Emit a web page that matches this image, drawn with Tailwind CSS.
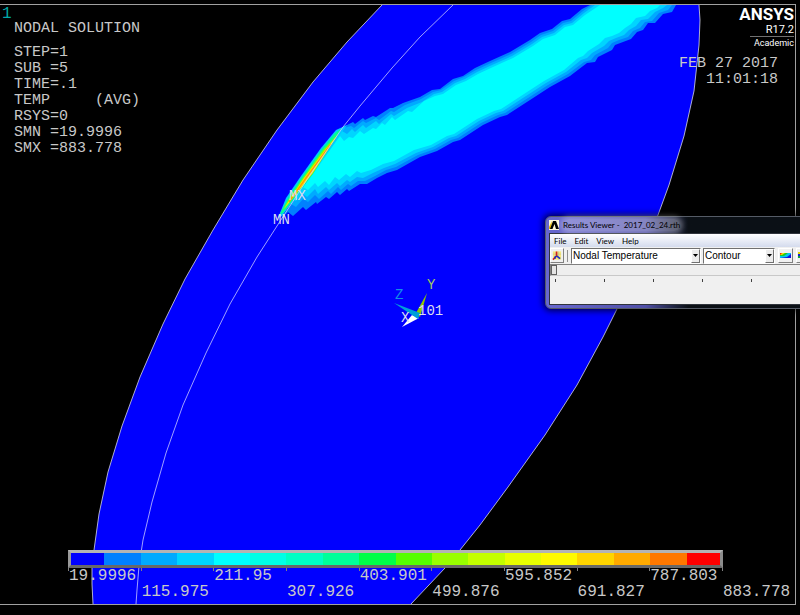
<!DOCTYPE html>
<html lang="en">
  <head>
    <meta charset="UTF-8" />
    <meta name="viewport" content="width=device-width, initial-scale=1.0" />
    <title>Nodal Solution</title>
    <script src="https://cdn.jsdelivr.net/npm/@tailwindcss/browser@4"></script>
  </head>
  <body class="bg-black">
    <main class="relative flex flex-col h-screen overflow-hidden bg-black pt-1 pb-[10px] pr-1 font-['Liberation_Mono',monospace] text-[15px] leading-4 text-[#c8c8c8]">
      <!-- contour plot -->
      <svg class="absolute inset-0 w-full h-full" viewBox="0 0 800 615" preserveAspectRatio="xMidYMid slice" role="img" aria-label="Temperature contour">
        <path fill="#0000ff" d="M382 5 347 42 313 82 277 130 243 180 213 230 185 279 163 324 140 377 122 426 108 472 99 514 94 550 92 568 92 584 93 604H411L445 568 460 550 480 525 508 487 545 435 577 385 603 337 617 309 658 215 669 185 684 136 694 91 699 45 700 20 699 5Z" />
        <g fill="none" stroke="#d8d8e8" stroke-width="0.8">
          <path d="M382 5 347 42 313 82 277 130 243 180 213 230 185 279 163 324 140 377 122 426 108 472 99 514 94 550 92 568 92 584 93 604" />
          <path d="M411 604 445 568 460 550 480 525 508 487 545 435 577 385 603 337 617 309 658 215 669 185 684 136 694 91 699 45 700 20 699 5" />
        </g>
        <path fill="#0080ff" d="M280 220 310 176 343 127 353 122 355 124 363 118 365 120 373 116 376 117 387 110 390 108 393 108 403 103 420 97 432 90 440 89 453 79 463 76 475 68 490 61 510 52 530 40 540 33 552 29 562 21 570 19 582 9 590 5H676L672 12 663 14 655 23 648 23 643 30 637 32 631 39 623 42 615 45 612 50 598 57 595 62 587 63 570 76 550 87 530 100 507 115 500 117 483 125 460 140 453 142 437 151 420 157 397 170 387 173 377 178 367 184 360 184 349 191 347 189 340 195 337 192 329 199 326 197 317 204 316 202 306 210 303 207 293 216 288 212Z" />
        <path fill="#00aaff" d="M282 217 310 176 343 128 351 126 354 128 363 121 366 123 376 118 379 120 391 111 394 112 405 105 421 99 433 92 441 90 454 81 464 77 476 70 491 63 511 54 531 42 541 35 553 31 563 23 571 21 583 11 592 5H672L668 10 659 13 652 21 645 22 640 28 633 31 628 37 619 40 612 43 608 48 595 55 591 60 584 62 568 74 548 85 528 98 505 113 498 115 481 123 458 138 451 140 435 149 418 155 396 167 386 170 375 176 365 181 358 181 351 186 348 184 341 190 338 187 331 194 328 191 319 199 315 195 308 202 303 199 296 207 291 204 287 210Z" />
        <path fill="#00d5ff" d="M284 213 310 177 342 131 347 134 352 129 355 132 363 125 366 128 376 121 379 124 391 114 394 116 407 108 422 102 434 94 442 92 455 83 465 79 477 72 492 65 512 56 532 44 542 37 554 33 564 25 572 23 584 13 595 5H667L663 8 655 12 648 19 641 20 636 26 629 30 624 35 616 38 609 41 604 46 592 53 587 58 581 60 566 72 546 83 526 96 503 111 496 113 479 121 456 136 449 138 433 147 416 153 395 164 384 168 373 173 363 178 357 177 350 182 347 180 340 186 337 183 329 190 326 187 318 194 315 189 307 197 302 193 296 201 291 199Z" />
        <path fill="#00ffff" d="M288 207 310 178 340 136 344 141 349 137 353 138 360 131 364 134 373 128 376 129 382 123 385 125 392 117 395 120 408 111 412 112 424 101 435 96 443 94 456 85 466 81 478 74 493 67 513 58 533 46 543 39 555 35 565 27 573 25 585 15 600 5H660L657 8 650 11 645 16 636 18 631 24 625 28 619 33 612 36 605 38 599 44 588 51 583 56 578 58 564 70 544 81 524 94 501 109 494 111 477 119 454 134 447 136 431 145 414 150 394 161 383 164 371 170 361 173 357 171 350 177 346 174 339 180 335 177 329 185 325 181 318 187 315 183 308 190 303 187 297 194 294 194Z" />

        <!-- hot edge under the beam -->
        <path fill="#00c8ff" d="M347 125 336 130 321 148 301 176 286 198 278 218 282 216 312 174Z" />
        <path fill="#00ff90" d="M341 129 335 133 322 149 302 177 288 198 280 214 283 213 313 174Z" />
        <path fill="#80ff00" d="M339 133 324 149 303 178 289 199 282 211 313 173Z" />
        <path fill="#ffe800" d="M337 136 325 150 304 178 290 199 284 209 312 174Z" />
        <path fill="none" stroke="#ff9900" stroke-width="1.300" d="M331 144 306 178 289 202" />
        <path fill="none" stroke="#c8c8ff" stroke-width="0.8" d="M453 5 420 37 392 68 360 106 343 127 310 175 277 226 257 257 230 304 206 353 183 405 166 453 152 502 143 540 139 566 137 590 136 604" />

        <!-- axis triad -->
        <path fill="#90c800" d="M427 293 416 313 420 317Z" />
        <path fill="#ffffff" d="M402 327 412 315 419 318Z" />
        <path fill="#009fd8" d="M394 303 420 313 418 319 412 315Z" />
        <g font-family="Liberation Mono, monospace" font-size="14" fill="#dcdcf0">
          <text x="289" y="200">MX</text>
          <text x="273" y="224">MN</text>
          <text x="418" y="315">101</text>
          <text x="401" y="322">X</text>
          <text x="427" y="289" fill="#a0c860">Y</text>
          <text x="395" y="299" fill="#1090e8">Z</text>
        </g>
      </svg>

      <div class="relative flex flex-1 flex-col border-t border-r border-b border-[#a0a0a0]">
        <header class="flex justify-between">
          <div class="pl-[2px] pt-px">
            <p class="text-[16px] text-[#00a8a8]">1</p>
            <div class="pl-3">
              <h1 class="-mt-px">NODAL SOLUTION</h1>
              <pre class="mt-2 font-['Liberation_Mono',monospace]">STEP=1
SUB =5
TIME=.1
TEMP     (AVG)
RSYS=0
SMN =19.9996
SMX =883.778</pre>
            </div>
          </div>
          <div class="flex flex-col items-end pr-px text-white">
            <div class="flex flex-col items-end font-['Roboto',sans-serif]">
              <p class="text-[17px] leading-[19px] font-bold">ANSYS</p>
              <p class="text-[11px] leading-3">R17.2</p>
              <p class="border-t border-[#707070] pl-1 text-[9px] leading-3">Academic</p>
            </div>
            <p class="mt-[7px] pr-4 text-right text-[#c8c8c8]">FEB 27 2017<br />11:01:18</p>
          </div>
        </header>

        <!-- colour legend -->
        <section class="mt-auto ml-[68px] mr-[72px] pb-[5px] text-[16px]" aria-label="Temperature legend">
          <div class="relative h-[18px]">
            <div class="grid h-full grid-cols-[repeat(18,minmax(0,1fr))]">
              <i class="bg-[#0000ff]"></i>
              <i class="bg-[#0080ff]"></i>
              <i class="bg-[#00aaff]"></i>
              <i class="bg-[#00d5ff]"></i>
              <i class="bg-[#00ffff]"></i>
              <i class="bg-[#00ffe5]"></i>
              <i class="bg-[#00ffc4]"></i>
              <i class="bg-[#00ff99]"></i>
              <i class="bg-[#00ff48]"></i>
              <i class="bg-[#55ff00]"></i>
              <i class="bg-[#99ff00]"></i>
              <i class="bg-[#c4ff00]"></i>
              <i class="bg-[#e8ff00]"></i>
              <i class="bg-[#fffa00]"></i>
              <i class="bg-[#ffd400]"></i>
              <i class="bg-[#ffaa00]"></i>
              <i class="bg-[#ff7800]"></i>
              <i class="bg-[#ff0000]"></i>
            </div>
            <div class="absolute inset-0 border-3 border-t-[#b4b4b4] border-r-[#8c8c8c] border-b-[#686868] border-l-[#999999]"></div>
          </div>
          <div class="flex h-[31px] justify-between">
            <span class="w-0 border-l border-[#808080] h-[3px]">19.9996</span>
            <span class="w-0 border-l border-[#808080] h-[3px] whitespace-pre-line">
115.975</span>
            <span class="w-0 border-l border-[#808080] h-[3px]">211.95</span>
            <span class="w-0 border-l border-[#808080] h-[3px] whitespace-pre-line">
307.926</span>
            <span class="w-0 border-l border-[#808080] h-[3px]">403.901</span>
            <span class="w-0 border-l border-[#808080] h-[3px] whitespace-pre-line">
499.876</span>
            <span class="w-0 border-l border-[#808080] h-[3px]">595.852</span>
            <span class="w-0 border-l border-[#808080] h-[3px] whitespace-pre-line">
691.827</span>
            <span class="w-0 border-l border-[#808080] h-[3px]">787.803</span>
            <span class="w-0 border-l border-[#808080] h-[3px] whitespace-pre-line">
883.778</span>
          </div>
        </section>
      </div>

      <!-- floating results viewer, runs off the right edge -->
      <section class="absolute left-[545px] -right-8 top-[216px] rounded-md border border-[#555b66] bg-linear-to-r from-[#6868d0] from-0% via-[#5050a8] via-35% to-[#0b1016] to-50% px-[3px] pb-[3px] font-['Lato',sans-serif] text-black shadow-[0_0_6px_2px_#000000b0]">
        <div class="flex h-4 items-center gap-1 whitespace-pre text-[8px] leading-3">
          <svg class="w-[10px] h-[10px]" viewBox="0 0 10 10">
            <path fill="#fff8dc" d="M0 0h10v10H0z" />
            <path fill="#e8b800" d="M0 7 3 1 2 9H0z" />
            <path fill="#000" d="M4 1h3l3 8H7L5.5 4 3.500 9H1z" />
          </svg>
          <h2 class="rounded-full bg-white/30 shadow-[0_0_5px_3px_#ffffff4d]">Results Viewer -  2017_02_24.rth</h2>
        </div>
        <div class="border border-[#30343c] bg-[#f0f0f0]">
          <nav class="flex h-[13px] items-center gap-2 bg-linear-to-b from-white to-[#d4dbed] pl-1 text-[8px] leading-3">
            <button>File</button>
            <button>Edit</button>
            <button>View</button>
            <button>Help</button>
          </nav>
          <div class="flex h-[17px] items-center gap-[2px] overflow-hidden font-['Liberation_Sans',sans-serif] text-[10px]">
            <button class="h-[15px] w-[14px] shrink-0 border border-t-white border-l-white border-r-[#808080] border-b-[#808080] p-px" aria-label="Plot results">
              <svg class="w-full h-full" viewBox="0 0 11 11">
                <path fill="#f4e87c" d="M1 1h9v9H1z" />
                <path fill="none" stroke="#b0b090" stroke-width="0.500" d="M7 1v9M1 4h9" />
                <path fill="none" stroke="#d02020" stroke-width="1.800" d="M5 1v5L1 10" />
                <path fill="none" stroke="#2030c0" stroke-width="1.800" d="M5 6l4 3M4 6 3 9" />
              </svg>
            </button>
            <i class="mx-px h-3 w-px shrink-0 bg-[#909090]"></i>
            <div class="relative w-[130px] shrink-0">
              <select class="block h-4 w-full appearance-none border border-t-[#707070] border-l-[#707070] border-r-white border-b-white bg-white pl-px leading-3" aria-label="Result item">
                <option>Nodal Temperature</option>
              </select>
              <span class="pointer-events-none absolute top-px right-px bottom-px flex w-[9px] items-center justify-center border border-t-white border-l-white border-r-[#707070] border-b-[#707070] bg-[#ececec]">
                <svg class="w-[5px] h-[3px]" viewBox="0 0 5 3"><path d="M0 0h5L2.500 3z" /></svg>
              </span>
            </div>
            <div class="relative w-[72px] shrink-0">
              <select class="block h-4 w-full appearance-none border border-t-[#707070] border-l-[#707070] border-r-white border-b-white bg-white pl-px leading-3" aria-label="Display type">
                <option>Contour</option>
              </select>
              <span class="pointer-events-none absolute top-px right-px bottom-px flex w-[9px] items-center justify-center border border-t-white border-l-white border-r-[#707070] border-b-[#707070] bg-[#ececec]">
                <svg class="w-[5px] h-[3px]" viewBox="0 0 5 3"><path d="M0 0h5L2.500 3z" /></svg>
              </span>
            </div>
            <button class="h-[15px] w-[15px] ml-px shrink-0 border border-t-white border-l-white border-r-[#808080] border-b-[#808080]" aria-label="Contour plot">
              <svg class="w-full h-full" viewBox="0 0 13 13">
                <path fill="#00c8f0" d="M1 4h11v5H1z" />
                <path fill="#20c820" d="M1 4h8L5 7H1z" />
                <path fill="#f0e000" d="M1 4h5L3 6H1z" />
                <path fill="#f02000" d="M1 4h2L1 6z" />
                <path fill="#1010e0" d="M12 5v4H1l7-1z" />
              </svg>
            </button>
            <button class="h-[15px] w-[15px] ml-px shrink-0 border border-t-white border-l-white border-r-[#808080] border-b-[#808080]" aria-label="List results">
              <svg class="w-full h-full" viewBox="0 0 13 13">
                <path fill="#e8d800" d="M1 3h11v2H1z" />
                <path fill="#1020d0" d="M1 5h11v2H1z" />
                <path fill="#10a040" d="M1 7h11v2H1z" />
              </svg>
            </button>
          </div>
          <input type="range" min="0" max="100" value="0" aria-label="Result set" class="block h-3 w-full appearance-none border border-t-[#808080] border-l-[#808080] border-r-white border-b-[#c8c8c8] bg-[#eeeeee] [&::-webkit-slider-thumb]:h-[10px] [&::-webkit-slider-thumb]:w-[6px] [&::-webkit-slider-thumb]:appearance-none [&::-webkit-slider-thumb]:border [&::-webkit-slider-thumb]:border-[#606060] [&::-webkit-slider-thumb]:bg-[#e4e4e4]" />
          <div class="flex h-7 gap-12 overflow-hidden pt-[3px] pl-[5px]">
            <i class="h-[3px] w-px shrink-0 bg-[#404040]"></i>
            <i class="h-[3px] w-px shrink-0 bg-[#404040]"></i>
            <i class="h-[3px] w-px shrink-0 bg-[#404040]"></i>
            <i class="h-[3px] w-px shrink-0 bg-[#404040]"></i>
            <i class="h-[3px] w-px shrink-0 bg-[#404040]"></i>
          </div>
        </div>
      </section>
    </main>
  </body>
</html>
